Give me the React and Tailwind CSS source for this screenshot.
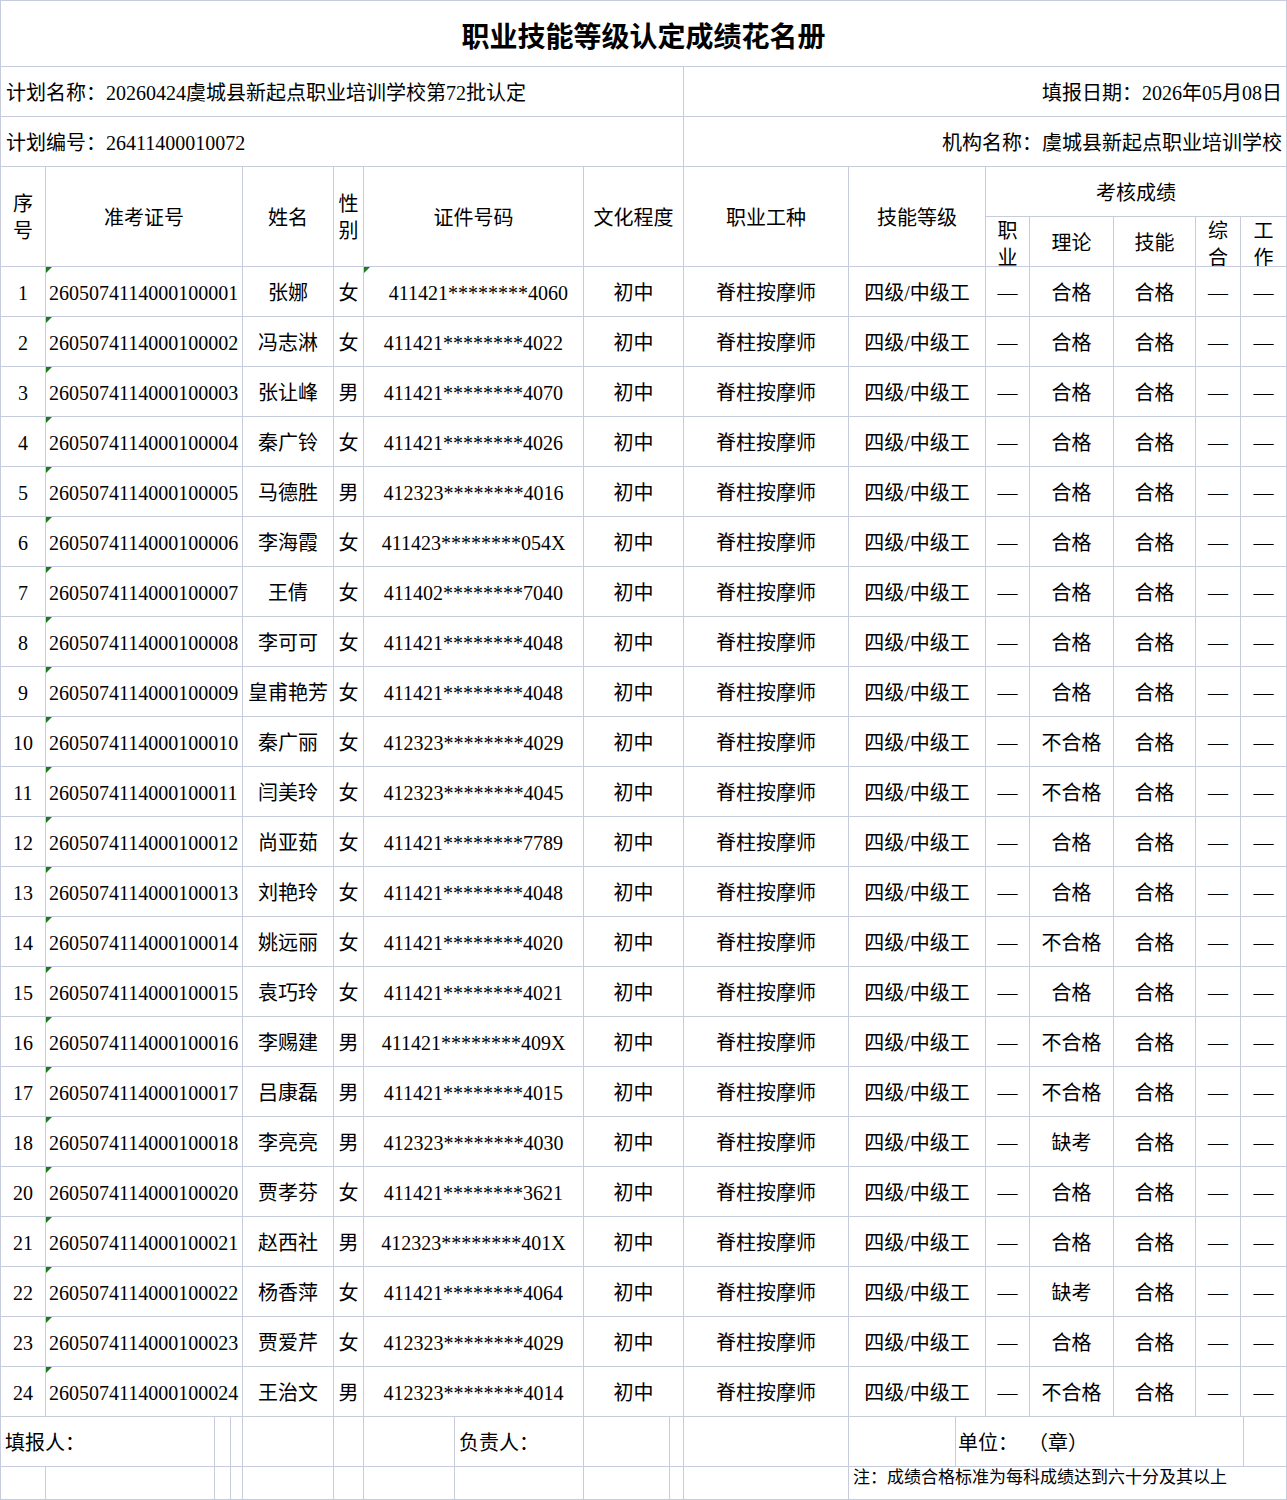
import React from "react";

const B = "border-r border-b border-[#c6ccdc]";
const COLS =
  "grid grid-cols-[45px_197px_91px_30px_220px_100px_165px_137px_44px_84px_82px_45px_46px]";

const rows = [
  ["1", "2605074114000100001", "张娜", "女", "411421********4060", "合格"],
  ["2", "2605074114000100002", "冯志淋", "女", "411421********4022", "合格"],
  ["3", "2605074114000100003", "张让峰", "男", "411421********4070", "合格"],
  ["4", "2605074114000100004", "秦广铃", "女", "411421********4026", "合格"],
  ["5", "2605074114000100005", "马德胜", "男", "412323********4016", "合格"],
  ["6", "2605074114000100006", "李海霞", "女", "411423********054X", "合格"],
  ["7", "2605074114000100007", "王倩", "女", "411402********7040", "合格"],
  ["8", "2605074114000100008", "李可可", "女", "411421********4048", "合格"],
  ["9", "2605074114000100009", "皇甫艳芳", "女", "411421********4048", "合格"],
  ["10", "2605074114000100010", "秦广丽", "女", "412323********4029", "不合格"],
  ["11", "2605074114000100011", "闫美玲", "女", "412323********4045", "不合格"],
  ["12", "2605074114000100012", "尚亚茹", "女", "411421********7789", "合格"],
  ["13", "2605074114000100013", "刘艳玲", "女", "411421********4048", "合格"],
  ["14", "2605074114000100014", "姚远丽", "女", "411421********4020", "不合格"],
  ["15", "2605074114000100015", "袁巧玲", "女", "411421********4021", "合格"],
  ["16", "2605074114000100016", "李赐建", "男", "411421********409X", "不合格"],
  ["17", "2605074114000100017", "吕康磊", "男", "411421********4015", "不合格"],
  ["18", "2605074114000100018", "李亮亮", "男", "412323********4030", "缺考"],
  ["20", "2605074114000100020", "贾孝芬", "女", "411421********3621", "合格"],
  ["21", "2605074114000100021", "赵西社", "男", "412323********401X", "合格"],
  ["22", "2605074114000100022", "杨香萍", "女", "411421********4064", "缺考"],
  ["23", "2605074114000100023", "贾爱芹", "女", "412323********4029", "合格"],
  ["24", "2605074114000100024", "王治文", "男", "412323********4014", "不合格"],
];

function Tri() {
  return (
    <span className="absolute top-0 left-0 w-0 h-0 border-t-[6px] border-r-[6px] border-t-[#1d7a1d] border-r-transparent" />
  );
}

function Cell({ className = "", children }) {
  return (
    <div className={`${B} flex items-center justify-center overflow-hidden whitespace-nowrap ${className}`}>
      {children}
    </div>
  );
}

function Stack({ a, b, className = "" }) {
  return (
    <div className={`${B} flex flex-col items-center overflow-hidden leading-[27px] ${className}`}>
      <span>{a}</span>
      <span>{b}</span>
    </div>
  );
}

export default function App() {
  return (
    <div className="w-[1287px] h-[1500px] bg-white overflow-hidden">
      <div className="w-[1287px] border-l border-t border-[#c6ccdc] text-black text-[20px] font-['Liberation_Serif','Noto_Sans_CJK_SC',serif]">
        {/* Title */}
        <div className={`${B} h-[66px] flex items-center justify-center pt-[2px] text-[28px] font-bold font-['Noto_Sans_CJK_SC',sans-serif]`}>
          职业技能等级认定成绩花名册
        </div>

        {/* Plan rows */}
        <div className="grid grid-cols-[683px_603px] h-[50px]">
          <div className={`${B} flex items-center pl-[5px] pt-[3px] whitespace-nowrap`}>
            计划名称：20260424虞城县新起点职业培训学校第72批认定
          </div>
          <div className={`${B} flex items-center justify-end pr-[4px] pt-[3px] whitespace-nowrap`}>
            填报日期：2026年05月08日
          </div>
        </div>
        <div className="grid grid-cols-[683px_603px] h-[50px]">
          <div className={`${B} flex items-center pl-[5px] pt-[3px] whitespace-nowrap`}>
            计划编号：26411400010072
          </div>
          <div className={`${B} flex items-center justify-end pr-[4px] pt-[3px] whitespace-nowrap`}>
            机构名称：虞城县新起点职业培训学校
          </div>
        </div>

        {/* Header */}
        <div className={`${COLS} grid-rows-[50px_50px] h-[100px]`}>
          <Stack a="序" b="号" className="row-span-2 justify-center pt-[3px]" />
          <Cell className="row-span-2 pt-[3px]">准考证号</Cell>
          <Cell className="row-span-2 pt-[3px]">姓名</Cell>
          <Stack a="性" b="别" className="row-span-2 justify-center pt-[3px]" />
          <Cell className="row-span-2 pt-[3px]">证件号码</Cell>
          <Cell className="row-span-2 pt-[3px]">文化程度</Cell>
          <Cell className="row-span-2 pt-[3px]">职业工种</Cell>
          <Cell className="row-span-2 pt-[3px]">技能等级</Cell>
          <Cell className="col-span-5 pt-[3px]">考核成绩</Cell>
          <Stack a="职" b="业" className="justify-start pt-[1px]" />
          <Cell className="pt-[3px]">理论</Cell>
          <Cell className="pt-[3px]">技能</Cell>
          <Stack a="综" b="合" className="justify-start pt-[1px]" />
          <Stack a="工" b="作" className="justify-start pt-[1px]" />
        </div>

        {/* Data */}
        {rows.map((r, i) => (
          <div key={r[0]} className={`${COLS} h-[50px]`}>
            <Cell className="pt-[3px]">{r[0]}</Cell>
            <Cell className="relative justify-start pl-[3px] pt-[3px]">
              <Tri />
              {r[1]}
            </Cell>
            <Cell className="pt-[3px]">{r[2]}</Cell>
            <Cell className="pt-[3px]">{r[3]}</Cell>
            <Cell className={`relative pt-[3px] ${i === 0 ? "pl-[10px]" : ""}`}>
              {i === 0 && <Tri />}
              {r[4]}
            </Cell>
            <Cell className="pt-[3px]">初中</Cell>
            <Cell className="pt-[3px]">脊柱按摩师</Cell>
            <Cell className="pt-[3px]">四级/中级工</Cell>
            <Cell className="pt-[3px]">—</Cell>
            <Cell className="pt-[3px]">{r[5]}</Cell>
            <Cell className="pt-[3px]">合格</Cell>
            <Cell className="pt-[3px]">—</Cell>
            <Cell className="pt-[3px]">—</Cell>
          </div>
        ))}

        {/* Footer row */}
        <div className="grid grid-cols-[214px_16px_12px_91px_30px_91px_129px_86px_14px_165px_107px_288px_43px] h-[50px]">
          <div className={`${B} flex items-center pl-[4px] pt-[3px] whitespace-nowrap`}>填报人：</div>
          <div className={B} />
          <div className={B} />
          <div className={B} />
          <div className={B} />
          <div className={B} />
          <div className={`${B} flex items-center pl-[4px] pt-[3px] whitespace-nowrap`}>负责人：</div>
          <div className={B} />
          <div className={B} />
          <div className={B} />
          <div className={B} />
          <div className={`${B} flex items-center pl-[2px] pt-[3px] whitespace-nowrap`}>
            单位：{"\u00a0\u00a0"}（章）
          </div>
          <div className={B} />
        </div>

        {/* Note row */}
        <div className="grid grid-cols-[45px_169px_16px_12px_91px_30px_91px_129px_86px_14px_165px_438px] h-[33px]">
          <div className={B} />
          <div className={B} />
          <div className={B} />
          <div className={B} />
          <div className={B} />
          <div className={B} />
          <div className={B} />
          <div className={B} />
          <div className={B} />
          <div className={B} />
          <div className={B} />
          <div className={`${B} flex items-start pl-[4px] text-[17px] leading-[22px] whitespace-nowrap`}>
            注：成绩合格标准为每科成绩达到六十分及其以上
          </div>
        </div>
      </div>
    </div>
  );
}
